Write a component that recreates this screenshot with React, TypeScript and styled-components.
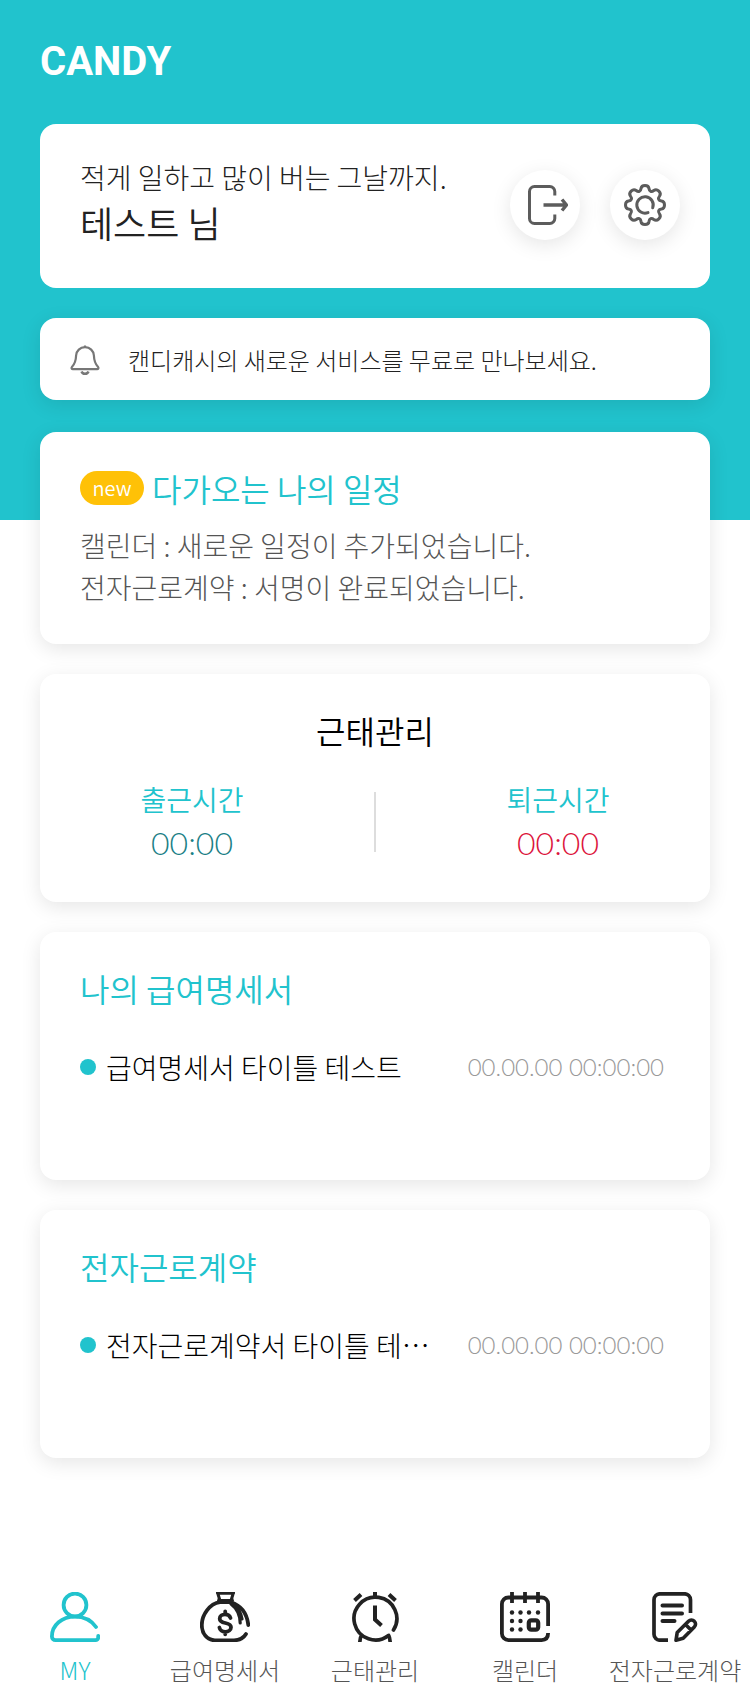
import React from 'react';
import styled, { createGlobalStyle } from 'styled-components';

const TEAL = '#21c3cd';
const INK = '#222';

const GlobalStyle = createGlobalStyle`
  *, *::before, *::after { box-sizing: border-box; }
  body {
    margin: 0;
    background: #fff;
    color: #000;
    font-family: 'Noto Sans CJK KR', sans-serif;
    font-weight: 300;
    word-break: keep-all;
  }
  h1, h2, p, ul, dl, dd { margin: 0; padding: 0; }
  ul { list-style: none; }
  a { color: inherit; text-decoration: none; }
  svg { display: block; }
`;

const Page = styled.div`
  display: flex;
  flex-direction: column;
  min-height: 100vh;
`;

const Header = styled.header`
  padding: 34px 40px 120px;
  background: ${TEAL};
`;

const Logo = styled.h1`
  margin-bottom: 34px;
  color: #fff;
  font: 700 40px/56px Roboto, sans-serif;
`;

const Card = styled.section<{ $tall?: boolean }>`
  padding: 32px 40px 36px;
  min-height: ${(p) => (p.$tall ? '248px' : '0')};
  border-radius: 16px;
  background: #fff;
  box-shadow: 0 5px 20px rgba(0, 0, 0, 0.1);
`;

const ProfileCard = styled(Card)`
  display: flex;
  justify-content: space-between;
  padding-right: 30px;
  padding-bottom: 42px;
  box-shadow: none;
`;

const Greeting = styled.p`
  color: ${INK};
  font-size: 28px;
  line-height: 42px;
`;

const UserName = styled.p`
  color: ${INK};
  font-size: 36px;
  font-weight: 350;
  line-height: 48px;
`;

const Actions = styled.div`
  display: flex;
  gap: 30px;
  padding-top: 14px;
`;

const RoundButton = styled.button`
  display: grid;
  place-items: center;
  width: 70px;
  height: 70px;
  padding: 0;
  border: 0;
  border-radius: 50%;
  background: #fff;
  box-shadow: 0 5px 20px rgba(0, 0, 0, 0.1);
  cursor: pointer;
`;

const NoticeCard = styled(Card)`
  display: flex;
  align-items: center;
  gap: 28px;
  margin-top: 30px;
  padding: 24px 30px 22px;
`;

const NoticeText = styled.p`
  color: ${INK};
  font-size: 24px;
  line-height: 36px;
`;

const Main = styled.main`
  display: flex;
  flex-direction: column;
  gap: 30px;
  margin-top: -88px;
  padding: 0 40px 134px;
`;

const CardTitle = styled.h2<{ $plain?: boolean }>`
  display: flex;
  align-items: center;
  justify-content: ${(p) => (p.$plain ? 'center' : 'flex-start')};
  gap: 8px;
  color: ${(p) => (p.$plain ? '#000' : TEAL)};
  font-size: 32px;
  font-weight: 350;
  line-height: 48px;
`;

const Badge = styled.span`
  width: 64px;
  border-radius: 17px;
  background: #ffc107;
  color: #fff;
  font-size: 20px;
  line-height: 34px;
  text-align: center;
`;

const NewsList = styled.ul`
  margin-top: 12px;
  color: #555;
  font-size: 28px;
  line-height: 42px;
`;

const Attendance = styled.dl`
  display: flex;
  align-items: center;
  margin: 24px -40px 0;
`;

const TimeBlock = styled.div`
  flex: 1;
  text-align: center;

  &:first-child {
    padding-right: 30px;
  }
  &:last-child {
    padding-left: 30px;
  }
`;

const Divider = styled.div`
  width: 2px;
  height: 60px;
  background: #ddd;
`;

const TimeLabel = styled.dt`
  color: ${TEAL};
  font-size: 28px;
  font-weight: 350;
  line-height: 42px;
`;

const TimeValue = styled.dd<{ $color: string }>`
  color: ${(p) => p.$color};
  font-family: Lato, sans-serif;
  font-size: 32px;
  line-height: 46px;
`;

const Item = styled.a`
  display: flex;
  align-items: center;
  gap: 10px;
  margin-top: 34px;
  padding-right: 6px;
  line-height: 42px;
`;

const Dot = styled.span`
  width: 16px;
  height: 16px;
  border-radius: 50%;
  background: ${TEAL};
`;

const ItemTitle = styled.span`
  flex: 1;
  font-size: 28px;
`;

const ItemDate = styled.time`
  color: #999;
  font-family: Lato, sans-serif;
  font-size: 24px;
`;

const TabBar = styled.nav`
  display: grid;
  grid-template-columns: repeat(5, 1fr);
  margin-top: auto;
  padding-bottom: 8px;
`;

const Tab = styled.a<{ $active?: boolean }>`
  display: flex;
  flex-direction: column;
  align-items: center;
  gap: 10px;
  color: ${(p) => (p.$active ? TEAL : '#555')};
  font-size: 24px;
  line-height: 36px;
  white-space: nowrap;
`;

const LogoutIcon = () => (
  <svg width="46" height="40" viewBox="-6 0 46 40" fill="none" stroke="#5c5c5c" strokeWidth="3">
    <path d="M26.8 10.5V6.5a5 5 0 0 0-5-5H6.5a5 5 0 0 0-5 5v27a5 5 0 0 0 5 5h15.300a5 5 0 0 0 5-5v-4" />
    <path d="M15.500 20H38M34 14.500l4.500 5.500-4.500 5.500" strokeWidth="3.400" strokeLinejoin="round" />
  </svg>
);

const GearIcon = () => (
  <svg width="42" height="42" viewBox="-21 -21 42 42" fill="none" stroke="#5c5c5c" strokeWidth="3" strokeLinecap="round" strokeLinejoin="round">
    <path d="M-4 -16.500C-3.500 -20.500 3.500 -20.500 4 -16.500C4.300 -13.500 6.500 -12.700 8.800 -14.500C12.200 -17 17 -12.200 14.500 -8.800C12.700 -6.500 13.500 -4.300 16.500 -4C20.500 -3.500 20.500 3.500 16.500 4C13.500 4.300 12.700 6.500 14.500 8.800C17 12.200 12.200 17 8.800 14.500C6.500 12.700 4.300 13.500 4 16.500C3.500 20.500 -3.500 20.500 -4 16.500C-4.300 13.500 -6.500 12.700 -8.800 14.500C-12.200 17 -17 12.200 -14.500 8.800C-12.700 6.500 -13.500 4.300 -16.500 4C-20.500 3.500 -20.500 -3.500 -16.500 -4C-13.500 -4.300 -12.700 -6.500 -14.500 -8.800C-17 -12.200 -12.200 -17 -8.800 -14.500C-6.500 -12.700 -4.300 -13.500 -4 -16.500Z" />
    <path d="M3 7.600A8.200 8.200 0 1 1 7.700 2.800" />
  </svg>
);

const BellIcon = () => (
  <svg width="30" height="30" viewBox="0 0 30 30" fill="none" stroke="#777" strokeWidth="2.2">
    <path d="M15 0.500v1.500M15 2.200c-5 0-8.600 3.600-8.900 8.300-.2 5.500-.8 8-4.200 11.500-.8 1.200-.2 2.200 1 2.200h24.200c1.200 0 1.800-1 1-2.200-3.400-3.500-4-6-4.200-11.500-.3-4.700-3.900-8.300-8.900-8.300z" />
    <path d="M11.500 26.500c1 3 6 3 7 0" strokeWidth="2.400" />
  </svg>
);

const UserIcon = () => (
  <svg width="50" height="50" viewBox="0 0 50 50" fill="none" stroke={TEAL} strokeWidth="3.800" strokeLinecap="round">
    <circle cx="25" cy="13" r="11.400" />
    <path d="M46 35C41.500 28.500 34 24.600 25 24.600 12 24.600 1.900 33 1.900 44.500a3.600 3.600 0 0 0 3.600 3.600H45.500a2.700 2.700 0 0 0 2.700-2.700V44" />
  </svg>
);

const MoneyIcon = () => (
  <svg width="50" height="50" viewBox="0 0 50 50" fill="none" stroke={INK} strokeWidth="3.800" strokeLinecap="round">
    <path d="M17.500 0.500l2 6.500M33.500 0.500l-2 6.500M17.500 1.200h16M19 6.500v2.500M32 6.500v2.500M18.500 8.500h14" strokeWidth="3" />
    <path d="M46 42C43.500 46 39.500 48.300 34 48.300H15C7 48.300 1.800 41.500 1.800 33 1.800 23 9.500 11.700 20 10.200h11C41 13.500 47 21 48.300 33" />
    <path d="M31 12c6 4.500 9 11 9.200 19M34 12c4.500 4.500 7 9 8 15" strokeWidth="3.200" />
    <path d="M30.500 26c-.8-2.600-3-3.600-5.500-3.600-3 0-5.300 1.600-5.300 4.300 0 6 11.300 2.600 11.300 8.600 0 2.800-2.600 4.500-5.700 4.500-3 0-5.300-1.300-5.900-4.300M25.200 19.500v2.600M25.200 40v2.300" strokeWidth="3.800" />
  </svg>
);

const ClockIcon = () => (
  <svg width="50" height="50" viewBox="0 0 50 50" fill="none" stroke={INK} strokeWidth="3.700">
    <path d="M43.500 38A21.400 21.400 0 1 0 38.500 43.500" strokeLinecap="round" />
    <path d="M25 0v6M25 13.500v14l6.500 6" strokeWidth="4" />
    <path d="M4.500 8.500l6.500-6M39 2.500l6.500 6" strokeWidth="4" />
    <path d="M12 42.500c-1.500 2-2.200 4.300-2.200 7.500M38 42.500c1.500 2 2.200 4.300 2.200 7.500" />
  </svg>
);

const CalendarIcon = () => (
  <svg width="50" height="50" viewBox="0 0 50 50" fill="none" stroke={INK} strokeWidth="3.800">
    <path d="M48.100 34V12a6.500 6.500 0 0 0-6.500-6.500H8.400A6.500 6.500 0 0 0 1.900 12v29.600a6.500 6.500 0 0 0 6.500 6.500h33.200c4 0 6.500-2.500 6.500-7" />
    <path d="M12 0v11M25 0v11M38 0v11" />
    <g fill={INK} stroke="none">
      {[[12, 20.5], [20.500, 20.5], [29, 20.5], [38, 20.5], [12, 29], [20.500, 29], [12, 37.5], [20.500, 37.5]].map(([x, y]) => (
        <circle key={`${x}-${y}`} cx={x} cy={y} r="2.200" />
      ))}
    </g>
    <rect x="28.800" y="28.300" width="9.400" height="9.400" rx="2.500" strokeWidth="4.200" />
  </svg>
);

const ContractIcon = () => (
  <svg width="50" height="50" viewBox="0 0 50 50" fill="none" stroke={INK} strokeWidth="3.700">
    <path d="M40.500 21V7.800a6 6 0 0 0-6-6H10a6 6 0 0 0-6 6v34.400a6 6 0 0 0 6 6h8" />
    <path d="M12.500 13.500h19.500M12.500 21.500h19.500M12.500 29h12" strokeWidth="4" strokeLinecap="round" />
    <path d="M26 48.200l1.200-7.600L38.500 29.200a4 4 0 0 1 5.800 0 4 4 0 0 1 0 5.800L33.200 46.300zM35.500 32.500l5.500 5.500" strokeWidth="3.600" strokeLinejoin="round" />
  </svg>
);

const DocumentCard = ({ title, item }: { title: string; item: string }) => (
  <Card $tall>
    <CardTitle>{title}</CardTitle>
    <Item href="#">
      <Dot />
      <ItemTitle>{item}</ItemTitle>
      <ItemDate>00.00.00 00:00:00</ItemDate>
    </Item>
  </Card>
);

const tabs = [
  { label: 'MY', icon: <UserIcon />, active: true },
  { label: '급여명세서', icon: <MoneyIcon /> },
  { label: '근태관리', icon: <ClockIcon /> },
  { label: '캘린더', icon: <CalendarIcon /> },
  { label: '전자근로계약', icon: <ContractIcon /> },
];

export default function App() {
  return (
    <Page>
      <GlobalStyle />
      <Header>
        <Logo>CANDY</Logo>
        <ProfileCard>
          <div>
            <Greeting>적게 일하고 많이 버는 그날까지.</Greeting>
            <UserName>테스트 님</UserName>
          </div>
          <Actions>
            <RoundButton type="button" aria-label="로그아웃">
              <LogoutIcon />
            </RoundButton>
            <RoundButton type="button" aria-label="설정">
              <GearIcon />
            </RoundButton>
          </Actions>
        </ProfileCard>
        <NoticeCard>
          <BellIcon />
          <NoticeText>캔디캐시의 새로운 서비스를 무료로 만나보세요.</NoticeText>
        </NoticeCard>
      </Header>
      <Main>
        <Card>
          <CardTitle>
            <Badge>new</Badge>
            다가오는 나의 일정
          </CardTitle>
          <NewsList>
            <li>캘린더 : 새로운 일정이 추가되었습니다.</li>
            <li>전자근로계약 : 서명이 완료되었습니다.</li>
          </NewsList>
        </Card>
        <Card>
          <CardTitle $plain>근태관리</CardTitle>
          <Attendance>
            <TimeBlock>
              <TimeLabel>출근시간</TimeLabel>
              <TimeValue $color="#1b7f86">00:00</TimeValue>
            </TimeBlock>
            <Divider />
            <TimeBlock>
              <TimeLabel>퇴근시간</TimeLabel>
              <TimeValue $color="#dc143c">00:00</TimeValue>
            </TimeBlock>
          </Attendance>
        </Card>
        <DocumentCard title="나의 급여명세서" item="급여명세서 타이틀 테스트" />
        <DocumentCard title="전자근로계약" item="전자근로계약서 타이틀 테⋯" />
      </Main>
      <TabBar>
        {tabs.map((tab) => (
          <Tab key={tab.label} href="#" $active={tab.active} aria-current={tab.active ? 'page' : undefined}>
            {tab.icon}
            {tab.label}
          </Tab>
        ))}
      </TabBar>
    </Page>
  );
}
